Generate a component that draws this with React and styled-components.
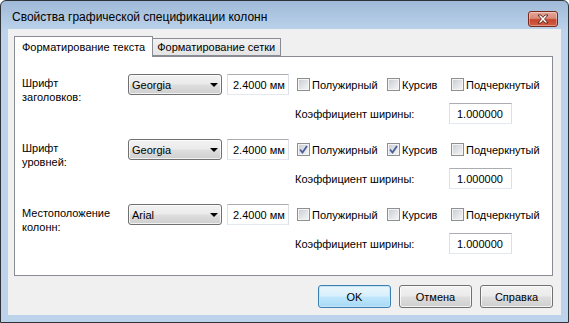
import styled, { createGlobalStyle } from 'styled-components';

const GlobalStyle = createGlobalStyle`
  * { box-sizing: border-box; }
  body {
    margin: 0;
    background: #ffffff;
    font-family: 'Liberation Sans', Arial, sans-serif;
    font-size: 11px;
    color: #000;
  }
`;

const Window = styled.div`
  width: 569px;
  height: 323px;
  border: 1px solid #2f3338;
  border-radius: 6px 6px 0 0;
  background: linear-gradient(#9fbad8 0px, #b4cce6 22px, #bcd3eb 30px, #bcd3eb 100%);
  padding: 0 7px 7px 7px;
  display: flex;
  flex-direction: column;
`;

const TitleBar = styled.div`
  height: 29px;
  display: flex;
  justify-content: space-between;
  align-items: flex-start;
`;

const Title = styled.div`
  padding: 9px 0 0 4px;
  font-size: 12px;
  line-height: 14px;
  color: #000;
`;

const CloseButton = styled.div`
  width: 30px;
  height: 16px;
  margin: 10px 3px 0 0;
  border: 1px solid #7a2a1c;
  border-radius: 3px;
  background: linear-gradient(#e5a898 0%, #d98a78 45%, #c7452e 55%, #cf5f45 100%);
  box-shadow: inset 0 0 0 1px rgba(255, 255, 255, 0.35);
  display: flex;
  align-items: center;
  justify-content: center;
`;

const Client = styled.div`
  flex: 1;
  background: #f0f0f0;
  padding: 7px 8px 7px 6px;
  display: flex;
  flex-direction: column;
`;

const TabStrip = styled.div`
  height: 20px;
  display: flex;
  align-items: flex-end;
  position: relative;
  z-index: 1;
`;

const Tab = styled.div`
  height: ${(p) => (p.$active ? '21px' : '18px')};
  margin-bottom: ${(p) => (p.$active ? '-1px' : '0')};
  padding: ${(p) => (p.$active ? '3px 7px 0 7px' : '1px 5px 0 4px')};
  border: 1px solid #898c95;
  border-bottom: ${(p) => (p.$active ? 'none' : '1px solid #898c95')};
  border-left: ${(p) => (p.$active ? '1px solid #898c95' : 'none')};
  background: ${(p) => (p.$active ? '#ffffff' : 'linear-gradient(#f2f2f2, #e4e4e4)')};
  white-space: nowrap;
  line-height: 14px;
`;

const Panel = styled.div`
  height: 220px;
  border: 1px solid #898c95;
  background: #ffffff;
  padding: 17px 0 0 7px;
  display: flex;
  flex-direction: column;
  gap: 15px;
`;

const Group = styled.div`
  display: flex;
`;

const GroupLabel = styled.div`
  width: 106px;
  padding-top: 2px;
  line-height: 14px;
`;

const Controls = styled.div`
  display: flex;
  flex-direction: column;
  gap: 8px;
`;

const Line = styled.div`
  height: 21px;
  display: flex;
  align-items: center;
  padding-left: ${(p) => p.$indent || 0}px;
`;

const Combo = styled.div`
  width: 94px;
  height: 21px;
  border: 1px solid #707070;
  border-radius: 3px;
  background: linear-gradient(#f2f2f2 0%, #ebebeb 45%, #dddddd 55%, #cfcfcf 100%);
  box-shadow: inset 0 0 0 1px rgba(255, 255, 255, 0.7);
  display: flex;
  align-items: center;
  justify-content: space-between;
  padding: 0 2px 0 3px;
`;

const Arrow = styled.div`
  width: 0;
  height: 0;
  margin-right: 1px;
  border-left: 4px solid transparent;
  border-right: 4px solid transparent;
  border-top: 4px solid #000;
`;

const TextBox = styled.div`
  width: ${(p) => p.$width}px;
  height: ${(p) => p.$height || 21}px;
  border: 1px solid #dbdfe6;
  border-top-color: #abadb3;
  border-bottom-color: #e3e9ef;
  background: #ffffff;
  padding-left: ${(p) => p.$pad}px;
  display: flex;
  align-items: center;
  white-space: nowrap;
  margin-left: ${(p) => p.$gap || 0}px;
`;

const CheckItem = styled.div`
  width: ${(p) => (p.$width ? `${p.$width}px` : 'auto')};
  display: flex;
  align-items: center;
  gap: 2px;
  margin-left: ${(p) => p.$gap || 0}px;
  white-space: nowrap;
`;

const Box = styled.div`
  width: 13px;
  height: 13px;
  border: 1px solid #8e8f8f;
  background: linear-gradient(135deg, #c6cbd1 0%, #e4e6e9 60%, #f6f6f6 100%);
  box-shadow: inset 0 0 0 1px #f4f4f4;
  display: flex;
  align-items: center;
  justify-content: center;
`;

const CoefLabel = styled.div`
  width: 154px;
`;

const Footer = styled.div`
  margin-top: 9px;
  display: flex;
  justify-content: flex-end;
  gap: 8px;
`;

const Button = styled.div`
  width: 73px;
  height: 23px;
  border: 1px solid ${(p) => (p.$default ? '#3c7fb1' : '#707070')};
  border-radius: 3px;
  background: ${(p) =>
    p.$default
      ? 'linear-gradient(#eaf6fd 0%, #d9f0fc 45%, #bee6fd 55%, #a7d9f5 100%)'
      : 'linear-gradient(#f2f2f2 0%, #ebebeb 45%, #dddddd 55%, #cfcfcf 100%)'};
  box-shadow: inset 0 0 0 1px ${(p) => (p.$default ? '#c4e5f6' : 'rgba(255,255,255,0.75)')};
  display: flex;
  align-items: center;
  justify-content: center;
`;

function Check({ checked, label, width, gap }) {
  return (
    <CheckItem $width={width} $gap={gap}>
      <Box>
        {checked && (
          <svg width="9" height="9" viewBox="0 0 9 9">
            <path d="M1 4.5 L3.5 7.5 L8 1" fill="none" stroke="#4a5f97" strokeWidth="1.8" />
          </svg>
        )}
      </Box>
      {label}
    </CheckItem>
  );
}

const groups = [
  { label: ['Шрифт', 'заголовков:'], font: 'Georgia', bold: false, italic: false },
  { label: ['Шрифт', 'уровней:'], font: 'Georgia', bold: true, italic: true },
  { label: ['Местоположение', 'колонн:'], font: 'Arial', bold: false, italic: false },
];

export default function App() {
  return (
    <>
      <GlobalStyle />
      <Window>
        <TitleBar>
          <Title>Свойства графической спецификации колонн</Title>
          <CloseButton>
            <svg width="12" height="10" viewBox="0 0 12 10">
              <path
                d="M1 1 H4 L6 3.4 L8 1 H11 L7.6 5 L11 9 H8 L6 6.6 L4 9 H1 L4.4 5 Z"
                fill="#ffffff"
                stroke="#5a2218"
                strokeWidth="0.9"
              />
            </svg>
          </CloseButton>
        </TitleBar>
        <Client>
          <TabStrip>
            <Tab $active>Форматирование текста</Tab>
            <Tab>Форматирование сетки</Tab>
          </TabStrip>
          <Panel>
            {groups.map((g) => (
              <Group key={g.label.join(' ')}>
                <GroupLabel>
                  {g.label[0]}
                  <br />
                  {g.label[1]}
                </GroupLabel>
                <Controls>
                  <Line>
                    <Combo>
                      {g.font}
                      <Arrow />
                    </Combo>
                    <TextBox $width={62} $pad={5} $gap={5}>
                      2.4000 мм
                    </TextBox>
                    <Check checked={g.bold} label="Полужирный" width={90} gap={8} />
                    <Check checked={g.italic} label="Курсив" width={64} />
                    <Check checked={false} label="Подчеркнутый" />
                  </Line>
                  <Line $indent={167}>
                    <CoefLabel>Коэффициент ширины:</CoefLabel>
                    <TextBox $width={63} $pad={7}>
                      1.000000
                    </TextBox>
                  </Line>
                </Controls>
              </Group>
            ))}
          </Panel>
          <Footer>
            <Button $default>OK</Button>
            <Button>Отмена</Button>
            <Button>Справка</Button>
          </Footer>
        </Client>
      </Window>
    </>
  );
}
